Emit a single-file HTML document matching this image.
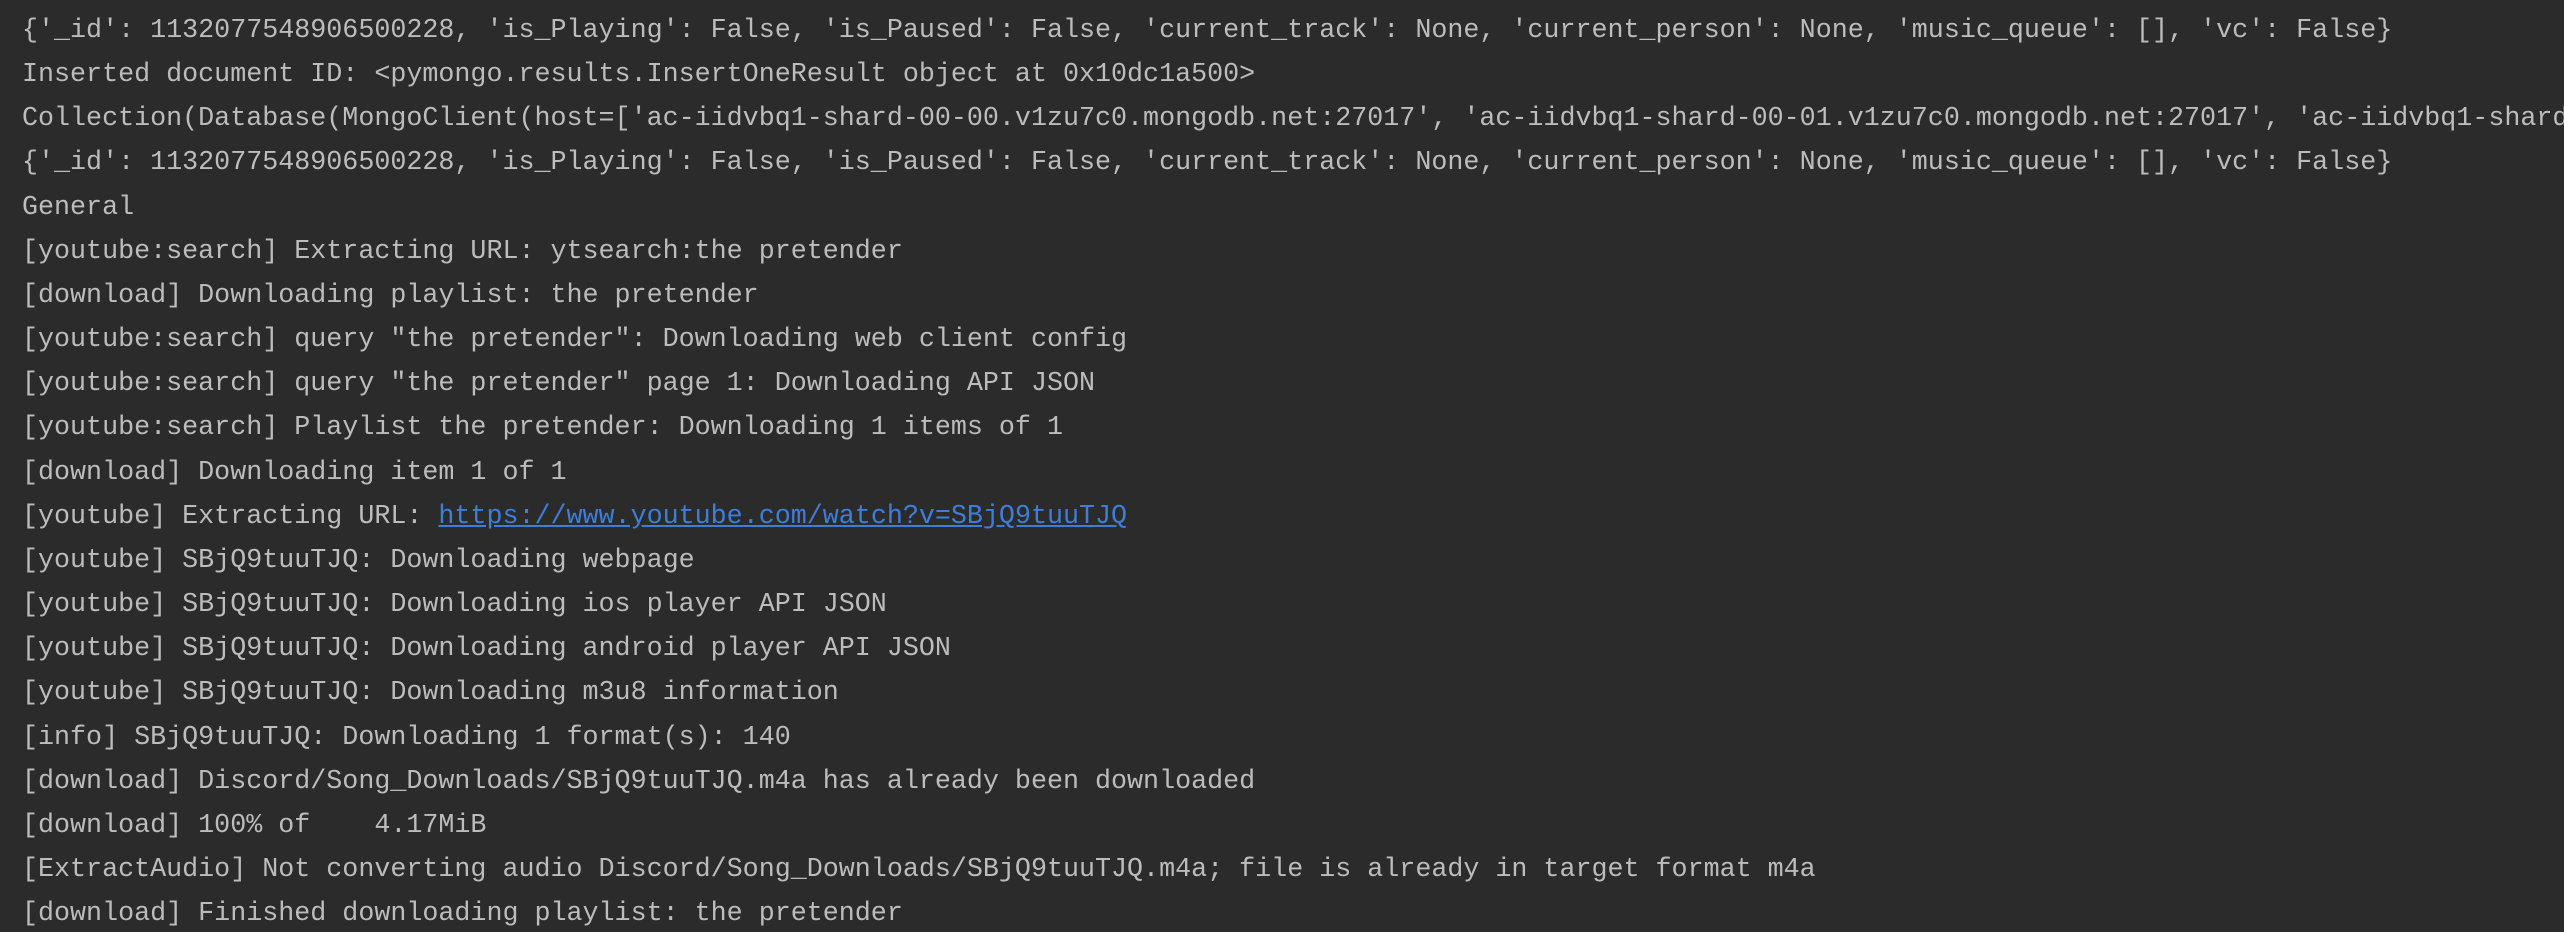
<!DOCTYPE html>
<html><head><meta charset="utf-8"><style>
html,body{margin:0;padding:0;background:#2b2b2b;width:2564px;height:932px;overflow:hidden}
pre{margin:0;padding:9px 0 0 22px;font-family:"Liberation Mono","DejaVu Sans Mono",monospace;font-size:26.7px;line-height:44.15px;color:#bcbcbc;white-space:pre;overflow:hidden;width:2542px}
a{color:#3f7ed8;text-decoration:underline}
</style></head><body><pre>{'_id': 1132077548906500228, 'is_Playing': False, 'is_Paused': False, 'current_track': None, 'current_person': None, 'music_queue': [], 'vc': False}
Inserted document ID: &lt;pymongo.results.InsertOneResult object at 0x10dc1a500&gt;
Collection(Database(MongoClient(host=['ac-iidvbq1-shard-00-00.v1zu7c0.mongodb.net:27017', 'ac-iidvbq1-shard-00-01.v1zu7c0.mongodb.net:27017', 'ac-iidvbq1-shard
{'_id': 1132077548906500228, 'is_Playing': False, 'is_Paused': False, 'current_track': None, 'current_person': None, 'music_queue': [], 'vc': False}
General
[youtube:search] Extracting URL: ytsearch:the pretender
[download] Downloading playlist: the pretender
[youtube:search] query "the pretender": Downloading web client config
[youtube:search] query "the pretender" page 1: Downloading API JSON
[youtube:search] Playlist the pretender: Downloading 1 items of 1
[download] Downloading item 1 of 1
[youtube] Extracting URL: <a>https://www.youtube.com/watch?v=SBjQ9tuuTJQ</a>
[youtube] SBjQ9tuuTJQ: Downloading webpage
[youtube] SBjQ9tuuTJQ: Downloading ios player API JSON
[youtube] SBjQ9tuuTJQ: Downloading android player API JSON
[youtube] SBjQ9tuuTJQ: Downloading m3u8 information
[info] SBjQ9tuuTJQ: Downloading 1 format(s): 140
[download] Discord/Song_Downloads/SBjQ9tuuTJQ.m4a has already been downloaded
[download] 100% of    4.17MiB
[ExtractAudio] Not converting audio Discord/Song_Downloads/SBjQ9tuuTJQ.m4a; file is already in target format m4a
[download] Finished downloading playlist: the pretender</pre></body></html>
